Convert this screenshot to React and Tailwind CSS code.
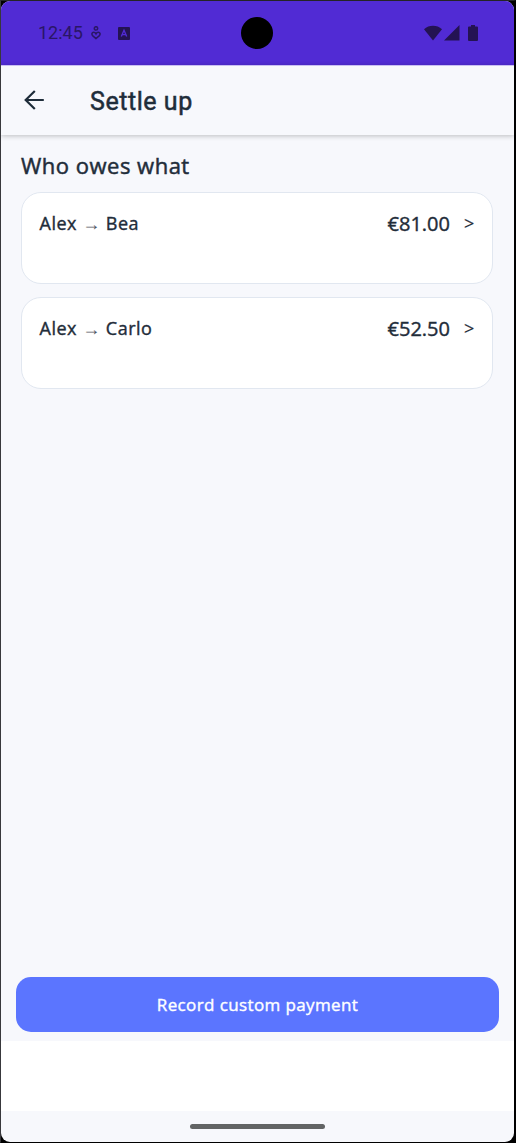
import React from "react";

const debts = [
  { from: "Alex", to: "Bea", amount: "€81.00" },
  { from: "Alex", to: "Carlo", amount: "€52.50" },
];

const StatusBar = () => {
  return (
    <div className="flex h-16 shrink-0 items-center bg-[#512bd4] pl-[37px] text-[#241353]">
      <span className="w-[45px] font-[Roboto] text-[18px] leading-none whitespace-nowrap opacity-85">
        12:45
      </span>
      <svg
        className="ml-[8px] h-[14px] w-[10px] opacity-85"
        viewBox="0 0 10 14"
        fill="none"
        stroke="currentColor"
        strokeWidth="1.5"
      >
        <circle cx="5" cy="2.4" r="1.7" />
        <path d="M5 12.600 1.600 9.600C.4 8.400 .8 6.200 2.600 6.200 3.800 6.200 4.600 7 5 7.800 5.400 7 6.200 6.200 7.400 6.200 9.200 6.200 9.600 8.400 8.400 9.600Z" />
      </svg>
      <svg className="ml-[17px] h-[13px] w-[12px]" viewBox="0 0 12 13">
        <rect width="12" height="13" rx="1" fill="currentColor" />
        <path
          d="M3.300 9.500 6 3.200 8.700 9.500M4.200 7.600H7.800"
          fill="none"
          stroke="#512bd4"
          strokeWidth="1.400"
        />
      </svg>
      <div className="ml-[111px] size-8 rounded-full bg-black" />
      <div className="ml-[151px] flex items-center">
        <svg
          className="h-[16px] w-[18px]"
          viewBox="0 0 18 16"
          fill="currentColor"
        >
          <path d="M9 15.500 0 4.200C5 -.4 13 -.4 18 4.200Z" />
        </svg>
        <svg
          className="ml-[2px] h-[16px] w-[16px]"
          viewBox="0 0 16 16"
          fill="currentColor"
        >
          <path d="M15.500 0V15.500H0Z" />
        </svg>
        <svg
          className="ml-[8px] h-[16px] w-[10px]"
          viewBox="0 0 10 16"
          fill="currentColor"
        >
          <path d="M3 0H7V1.500H9Q10 1.500 10 2.500V15Q10 16 9 16H1Q0 16 0 15V2.500Q0 1.500 1 1.500H3Z" />
        </svg>
      </div>
    </div>
  );
};

const Header = () => {
  return (
    <header className="z-10 flex h-[70px] shrink-0 items-center border-t border-[#c9bff2] bg-[#f7f8fc] pl-[23px] shadow-[0_1px_5px_rgba(0,0,0,0.24)]">
      <svg
        className="mb-[2px] size-5"
        viewBox="0 0 20 20"
        fill="none"
        stroke="currentColor"
        strokeWidth="2.200"
      >
        <path d="M19.800 10H2M10.800 1 1.700 10 10.800 19" />
      </svg>
      <h1 className="ml-[46px] pt-[3px] font-[Roboto] text-[25px] tracking-[0.55px] [-webkit-text-stroke:0.500px_currentColor]">
        Settle up
      </h1>
    </header>
  );
};

const DebtCard = ({ debt }) => {
  return (
    <div className="flex h-[91.5px] items-start rounded-[20px] border border-[#e1e7f0] bg-white pt-[17px] pr-[17px] pl-[17.500px] text-[18px] leading-[27px] [-webkit-text-stroke:0.400px_currentColor]">
      <span className="flex-1 tracking-[0.5px]">
        {debt.from}{" "}
        <span className="opacity-80 [-webkit-text-stroke:0]">→</span>{" "}
        {debt.to}
      </span>
      <span className="text-[20px]">{debt.amount}</span>
      <span className="ml-[14px] w-[11px] [-webkit-text-stroke:0.200px_currentColor]">
        &gt;
      </span>
    </div>
  );
};

const App = () => {
  return (
    <div className="h-[1143px] w-[516px] bg-black font-['Open_Sans','Noto_Sans',sans-serif] text-[#1f2d3a]">
      <div className="h-full border-t border-r-2 border-b border-l border-t-[#242426] border-r-black border-b-black border-l-[#38383c]">
        <div className="flex h-full flex-col overflow-hidden rounded-[9px] bg-[#f7f8fc]">
          <StatusBar />
          <Header />
          <main className="flex-1 pt-[14px] pr-[21px] pl-5">
            <h2 className="text-[22px] leading-8 tracking-[0.5px] [-webkit-text-stroke:0.500px_currentColor]">
              Who owes what
            </h2>
            <div className="mt-[11.2px] flex flex-col gap-[13.8px]">
              {debts.map((debt) => (
                <DebtCard key={debt.to} debt={debt} />
              ))}
            </div>
          </main>
          <div className="px-[15px] pb-[9.500px]">
            <button className="h-[55px] w-full rounded-[15px] bg-[#5b75ff] pt-px text-[17px] tracking-[0.38px] text-white [-webkit-text-stroke:0.400px_currentColor]">
              Record custom payment
            </button>
          </div>
          <div className="h-[70px] shrink-0 bg-white" />
          <div className="flex h-[31px] shrink-0 items-center justify-center">
            <div className="h-[5px] w-[135px] rounded-full bg-[#626465]" />
          </div>
        </div>
      </div>
    </div>
  );
};

export default App;
